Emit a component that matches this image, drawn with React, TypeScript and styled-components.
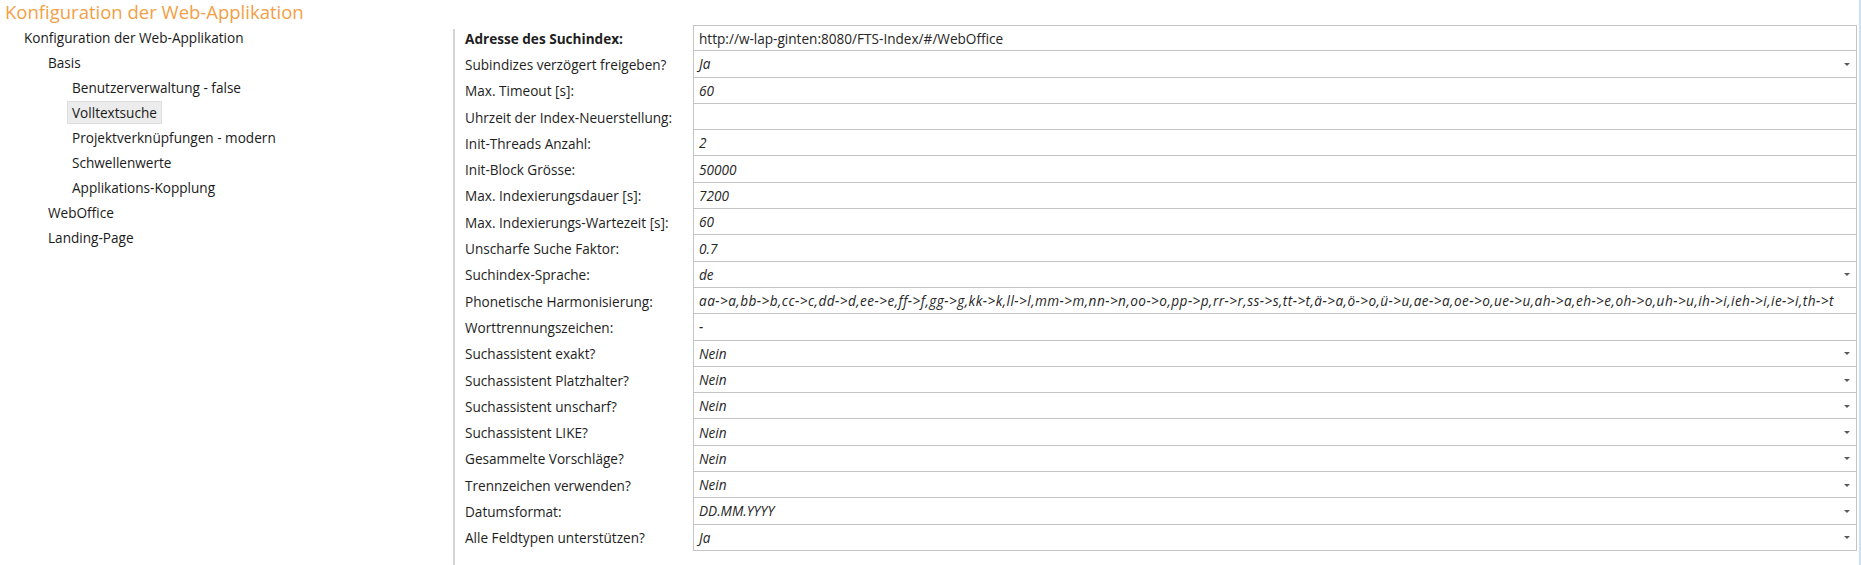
import styled, { createGlobalStyle } from 'styled-components';

const GlobalStyle = createGlobalStyle`
  html, body {
    margin: 0;
    padding: 0;
    background: #ffffff;
  }
  body {
    font-family: "Open Sans", "Noto Sans", sans-serif;
    color: #1f1f1f;
  }
`;

type TreeItem = { label: string; level: number; selected?: boolean };

const treeItems: TreeItem[] = [
  { label: 'Konfiguration der Web-Applikation', level: 0 },
  { label: 'Basis', level: 1 },
  { label: 'Benutzerverwaltung - false', level: 2 },
  { label: 'Volltextsuche', level: 2, selected: true },
  { label: 'Projektverknüpfungen - modern', level: 2 },
  { label: 'Schwellenwerte', level: 2 },
  { label: 'Applikations-Kopplung', level: 2 },
  { label: 'WebOffice', level: 1 },
  { label: 'Landing-Page', level: 1 },
];

const phonetic =
  'aa->a,bb->b,cc->c,dd->d,ee->e,ff->f,gg->g,kk->k,ll->l,mm->m,nn->n,oo->o,pp->p,rr->r,ss->s,tt->t,ä->a,ö->o,ü->u,ae->a,oe->o,ue->u,ah->a,eh->e,oh->o,uh->u,ih->i,ieh->i,ie->i,th->t';

type Setting = {
  label: string;
  value: string;
  select?: boolean;
  strong?: boolean;
  spaced?: boolean;
};

const settings: Setting[] = [
  { label: 'Adresse des Suchindex:', value: 'http://w-lap-ginten:8080/FTS-Index/#/WebOffice', strong: true },
  { label: 'Subindizes verzögert freigeben?', value: 'Ja', select: true },
  { label: 'Max. Timeout [s]:', value: '60' },
  { label: 'Uhrzeit der Index-Neuerstellung:', value: '' },
  { label: 'Init-Threads Anzahl:', value: '2' },
  { label: 'Init-Block Grösse:', value: '50000' },
  { label: 'Max. Indexierungsdauer [s]:', value: '7200' },
  { label: 'Max. Indexierungs-Wartezeit [s]:', value: '60' },
  { label: 'Unscharfe Suche Faktor:', value: '0.7' },
  { label: 'Suchindex-Sprache:', value: 'de', select: true },
  { label: 'Phonetische Harmonisierung:', value: phonetic, spaced: true },
  { label: 'Worttrennungszeichen:', value: '-' },
  { label: 'Suchassistent exakt?', value: 'Nein', select: true },
  { label: 'Suchassistent Platzhalter?', value: 'Nein', select: true },
  { label: 'Suchassistent unscharf?', value: 'Nein', select: true },
  { label: 'Suchassistent LIKE?', value: 'Nein', select: true },
  { label: 'Gesammelte Vorschläge?', value: 'Nein', select: true },
  { label: 'Trennzeichen verwenden?', value: 'Nein', select: true },
  { label: 'Datumsformat:', value: 'DD.MM.YYYY', select: true },
  { label: 'Alle Feldtypen unterstützen?', value: 'Ja', select: true },
];

export default function App() {
  return (
    <>
      <GlobalStyle />
      <Page>
        <Title>Konfiguration der Web-Applikation</Title>
        <Main>
          <Tree>
            {treeItems.map((item) => (
              <TreeRow key={item.label} $level={item.level}>
                <TreeLabel $selected={item.selected}>{item.label}</TreeLabel>
              </TreeRow>
            ))}
          </Tree>
          <Panel>
            <Form>
              {settings.map((s) => (
                <FormRow key={s.label}>
                  <Label $strong={s.strong}>{s.label}</Label>
                  <Field>
                    <Value $plain={s.strong} $spaced={s.spaced}>
                      {s.value}
                    </Value>
                    {s.select && <Arrow />}
                  </Field>
                </FormRow>
              ))}
            </Form>
          </Panel>
        </Main>
      </Page>
    </>
  );
}

const Page = styled.div`
  width: 1861px;
  height: 565px;
  box-sizing: border-box;
  border-right: 2px solid #cfe0f4;
  overflow: hidden;
`;

const Title = styled.div`
  height: 25px;
  padding-left: 5px;
  font-size: 18.5px;
  line-height: 24px;
  color: #f3a046;
`;

const Main = styled.div`
  display: flex;
`;

const Tree = styled.div`
  width: 453px;
  flex-shrink: 0;
  display: flex;
  flex-direction: column;
`;

const TreeRow = styled.div<{ $level: number }>`
  height: 25px;
  display: flex;
  align-items: center;
  padding-left: ${(p) => 19 + p.$level * 24}px;
`;

const TreeLabel = styled.span<{ $selected?: boolean }>`
  font-size: 13.6px;
  line-height: 21px;
  padding: 0 4px;
  color: #1a1a1a;
  background: ${(p) => (p.$selected ? '#ececec' : 'transparent')};
  border: 1px solid ${(p) => (p.$selected ? '#dedede' : 'transparent')};
`;

const Panel = styled.div`
  flex: 1;
  margin-top: 4px;
  height: 540px;
  border-left: 2px solid #d4d4d4;
`;

const Form = styled.div`
  margin-top: -4px;
  display: flex;
  flex-direction: column;
  width: 1402px;
`;

const FormRow = styled.div`
  display: grid;
  grid-template-columns: 238px 1fr;
  height: 26.3px;
`;

const Label = styled.div<{ $strong?: boolean }>`
  display: flex;
  align-items: center;
  padding-left: 10px;
  font-size: 13.6px;
  font-weight: ${(p) => (p.$strong ? 700 : 400)};
  color: #1e1e1e;
  white-space: nowrap;
`;

const Field = styled.div`
  position: relative;
  display: flex;
  align-items: center;
  border: 1px solid #c4c4c4;
  margin-top: -1px;
  padding: 0 5px;
  background: #ffffff;
  overflow: hidden;
  ${FormRow}:first-child & {
    margin-top: 0;
  }
`;

const Value = styled.span<{ $plain?: boolean; $spaced?: boolean }>`
  font-size: 13.6px;
  font-style: ${(p) => (p.$plain ? 'normal' : 'italic')};
  letter-spacing: ${(p) => (p.$spaced ? '0.45px' : 'normal')};
  color: #262626;
  white-space: nowrap;
`;

const Arrow = styled.span`
  position: absolute;
  right: 6px;
  top: 50%;
  margin-top: -1px;
  width: 0;
  height: 0;
  border-left: 3px solid transparent;
  border-right: 3px solid transparent;
  border-top: 3px solid #5a5a5a;
`;
